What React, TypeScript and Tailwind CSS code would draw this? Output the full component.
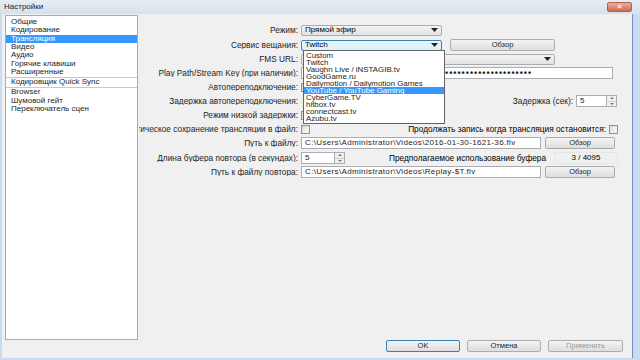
import React from "react";

const navItems = [
  "Общие",
  "Кодирование",
  "Трансляция",
  "Видео",
  "Аудио",
  "Горячие клавиши",
  "Расширенные",
];

const services = [
  "Custom",
  "Twitch",
  "Vaughn Live / iNSTAGIB.tv",
  "GoodGame.ru",
  "Dailymotion / Dailymotion Games",
  "YouTube / YouTube Gaming",
  "CyberGame.TV",
  "hitbox.tv",
  "connectcast.tv",
  "Azubu.tv",
];

const Arrow = () => (
  <svg width="7" height="4" viewBox="0 0 7 4" className="shrink-0">
    <path d="M0 0h7L3.5 4z" fill="#222" />
  </svg>
);

const Row = ({ label, children }: { label: string; children?: React.ReactNode }) => (
  <div className="flex h-[14px] items-center">
    <div className="flex w-[162px] shrink-0 justify-end overflow-hidden whitespace-nowrap pr-[3px] text-[#1e1e1e]">
      {label}
    </div>
    {children}
  </div>
);

const Btn = ({ label, w, focus, off }: { label: string; w: string; focus?: boolean; off?: boolean }) => (
  <div
    className={`flex h-[12px] ${w} items-center justify-center rounded-[2px] border bg-gradient-to-b from-[#f4f4f4] to-[#dedede] text-[7.5px] ${
      focus ? "border-[#3c7fb1]" : "border-[#acacac]"
    } ${off ? "text-[#9a9a9a]" : "text-[#1e1e1e]"}`}
  >
    {label}
  </div>
);

const Input = ({ w, children }: { w: string; children?: React.ReactNode }) => (
  <div className={`flex h-[12px] ${w} items-center overflow-hidden whitespace-nowrap border border-[#abadb3] bg-white px-[3px] text-[8px] text-[#1e1e1e]`}>
    {children}
  </div>
);

const Spin = () => (
  <div className="flex h-[12px] w-[10px] flex-col border border-l-0 border-[#abadb3] bg-[#f0f0f0]">
    <div className="flex flex-1 items-center justify-center border-b border-[#d0d0d0]">
      <svg width="4" height="2" viewBox="0 0 4 2"><path d="M0 2h4L2 0z" fill="#777" /></svg>
    </div>
    <div className="flex flex-1 items-center justify-center">
      <svg width="4" height="2" viewBox="0 0 4 2"><path d="M0 0h4L2 2z" fill="#777" /></svg>
    </div>
  </div>
);

const Check = () => <div className="h-[9px] w-[9px] shrink-0 border border-[#8f8f8f] bg-gradient-to-br from-[#dcdcdc] to-[#fafafa]" />;

export default function App() {
  return (
    <div
      className="flex h-[360px] w-[640px] flex-col overflow-hidden bg-[#c9dbee] text-[8.3px] leading-none"
      style={{ fontFamily: '"Liberation Sans", Arial, sans-serif' }}
    >
      <div className="flex h-[14px] shrink-0 items-center justify-between bg-gradient-to-b from-[#e6edf5] to-[#d6e1ec] pl-[4px] pr-[8px]">
        <span className="text-[8px] text-[#1b1b1b]">Настройки</span>
        <div className="flex h-[10px] w-[25px] items-center justify-center rounded-[2px] border border-[#b3604c] bg-gradient-to-b from-[#eab3a0] to-[#d2654c]">
          <span className="text-[8px] font-bold leading-none text-white">×</span>
        </div>
      </div>
      <div className="ml-[2px] mr-[7px] mb-[3px] flex flex-1 flex-col border-r border-[#6e8eb5] bg-[#f0f0f0]">
        <div className="flex flex-1">
          <div className="ml-[3px] mt-[1px] flex h-[325px] w-[133px] shrink-0 flex-col border border-[#aaaaaa] bg-white pt-[2px] text-[8px] text-[#1e1e1e]">
            {navItems.map((t) => (
              <div
                key={t}
                className={`flex h-[8.3px] items-center pl-[5px] ${t === "Трансляция" ? "bg-[#3399ff] text-white" : ""}`}
              >
                {t}
              </div>
            ))}
            <div className="my-[0.5px] border-t border-[#c8c8c8]" />
            <div className="flex h-[8px] items-center pl-[5px]">Кодировщик Quick Sync</div>
            <div className="my-[0.5px] border-t border-[#c8c8c8]" />
            <div className="flex h-[8.3px] items-center pl-[5px]">Browser</div>
            <div className="flex h-[8.3px] items-center pl-[5px]">Шумовой гейт</div>
            <div className="flex h-[8.3px] items-center pl-[5px]">Переключатель сцен</div>
          </div>

          <div className="relative ml-[1px] flex flex-1 flex-col overflow-hidden pt-[9px]">
            <Row label="Режим:">
              <div className="flex h-[11px] w-[141px] items-center justify-between rounded-[2px] border border-[#acacac] bg-gradient-to-b from-[#f4f4f4] to-[#e2e2e2] px-[3px] text-[8px]">
                <span>Прямой эфир</span>
                <Arrow />
              </div>
            </Row>
            <div className="h-[1px]" />
            <Row label="Сервис вещания:">
              <div className="flex h-[11px] w-[141px] items-center justify-between rounded-[2px] border border-[#3c7fb1] bg-gradient-to-b from-[#eaf6fd] to-[#d9f0fc] px-[3px] text-[8px]">
                <span>Twitch</span>
                <Arrow />
              </div>
              <div className="ml-[8px]">
                <Btn label="Обзор" w="w-[105px]" />
              </div>
            </Row>
            <Row label="FMS URL:">
              <div className="flex h-[11px] w-[254px] items-center justify-end rounded-[2px] border border-[#acacac] bg-gradient-to-b from-[#f4f4f4] to-[#e2e2e2] px-[3px]">
                <Arrow />
              </div>
            </Row>
            <Row label="Play Path/Stream Key (при наличии):">
              <Input w="w-[312px]">
                <span className="pl-[140px] text-[9px] font-bold tracking-[1px]">•••••••••••••••••••••</span>
              </Input>
            </Row>
            <Row label="Автопереподключение:">
              <Check />
            </Row>
            <Row label="Задержка автопереподключения:">
              <div className="ml-auto mr-[15px] flex items-center">
                <span className="mr-[3px] text-[#1e1e1e]">Задержка (сек):</span>
                <Input w="w-[31px]">5</Input>
                <Spin />
              </div>
            </Row>
            <Row label="Режим низкой задержки:">
              <Check />
            </Row>
            <Row label="Автоматическое сохранение трансляции в файл:">
              <Check />
              <div className="ml-auto mr-[14px] flex items-center">
                <span className="mr-[3px]">Продолжать запись когда трансляция остановится:</span>
                <Check />
              </div>
            </Row>
            <Row label="Путь к файлу:">
              <Input w="w-[240px]">
                <span className="tracking-[0.35px]">C:\Users\Administrator\Videos\2016-01-30-1621-36.flv</span>
              </Input>
              <div className="ml-[4px]">
                <Btn label="Обзор" w="w-[70px]" />
              </div>
            </Row>
            <div className="h-[1px]" />
            <Row label="Длина буфера повтора (в секундах):">
              <Input w="w-[34px]">5</Input>
              <Spin />
              <span className="ml-[44px] shrink-0 whitespace-nowrap text-[8.3px]">Предполагаемое использование буфера</span>
              <div className="ml-auto mr-[14px] flex h-[12px] w-[64px] shrink-0 items-center justify-center border border-[#e6e6e6] text-[8px]">
                3 / 4095
              </div>
            </Row>
            <Row label="Путь к файлу повтора:">
              <Input w="w-[240px]">
                <span className="tracking-[0.35px]">C:\Users\Administrator\Videos\Replay-$T.flv</span>
              </Input>
              <div className="ml-[4px]">
                <Btn label="Обзор" w="w-[70px]" />
              </div>
            </Row>

            <div className="absolute left-[164px] top-[36px] flex w-[142px] flex-col border border-[#646464] bg-white py-[1px] text-[7.9px] text-[#1e1e1e]">
              {services.map((s) => (
                <div
                  key={s}
                  className={`flex h-[7px] items-center pl-[2px] ${s.startsWith("YouTube") ? "bg-[#3399ff] text-white" : ""}`}
                >
                  {s}
                </div>
              ))}
            </div>
          </div>
        </div>
        <div className="flex h-[18px] shrink-0 items-start justify-end gap-[7px] pr-[9px]">
          <Btn label="OK" w="w-[74px]" focus />
          <Btn label="Отмена" w="w-[74px]" />
          <Btn label="Применить" w="w-[75px]" off />
        </div>
      </div>
    </div>
  );
}
